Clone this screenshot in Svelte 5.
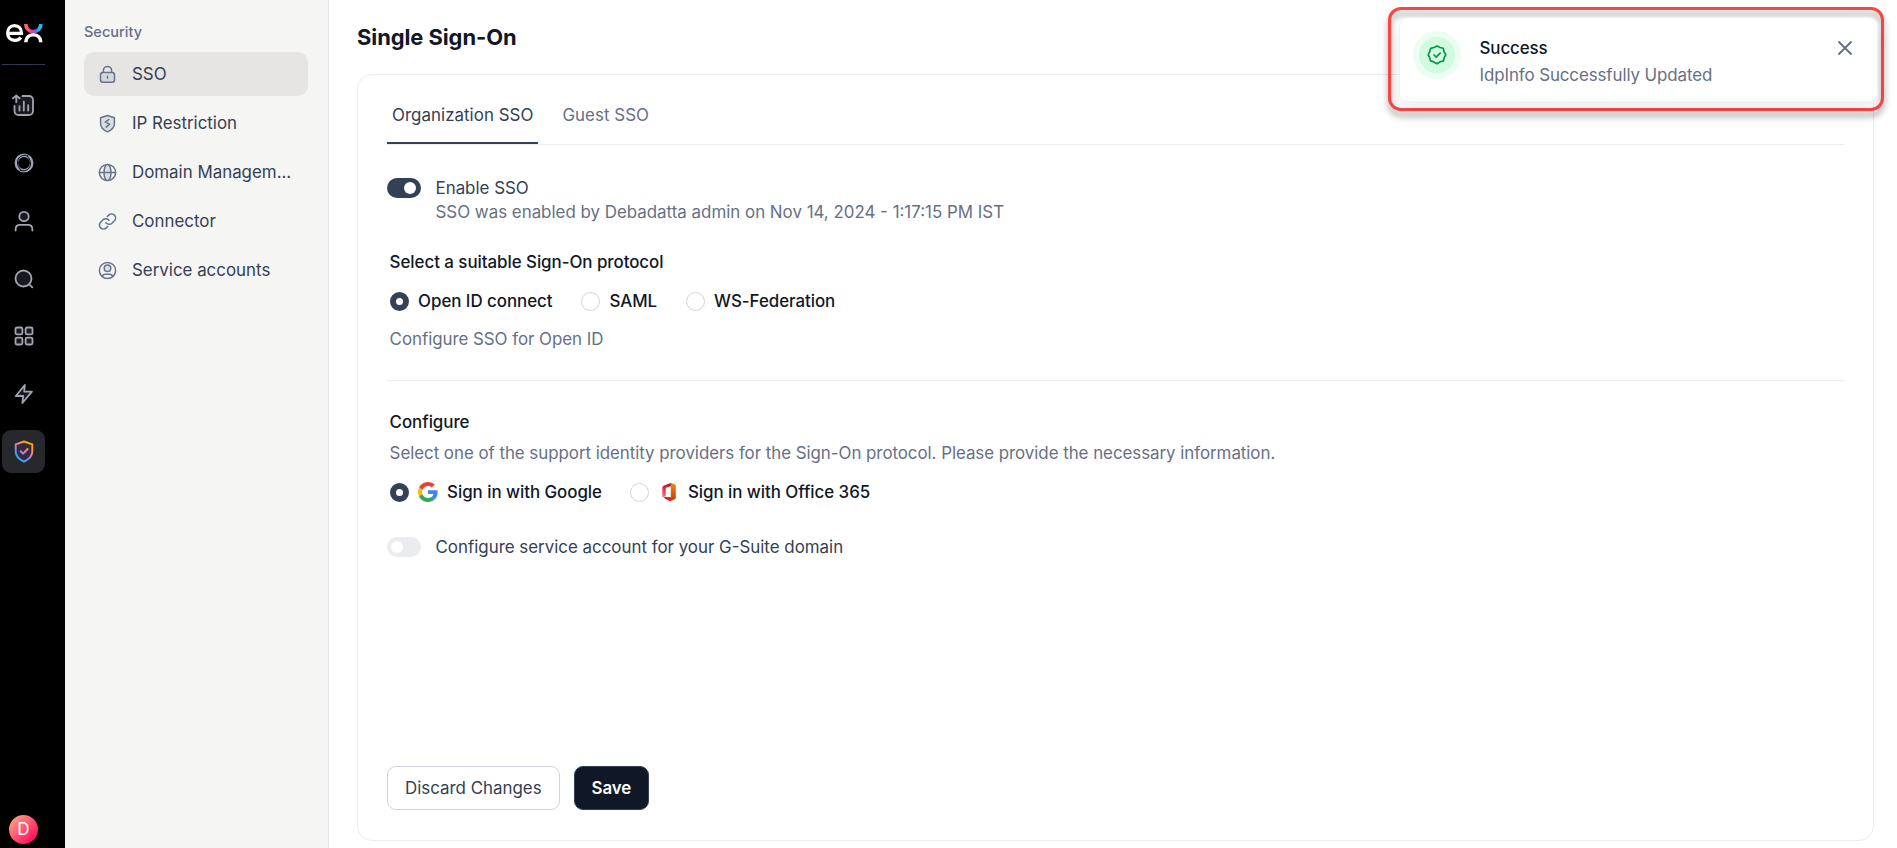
<script>
  const nav = [
    { id: 'lock', label: 'SSO', active: true },
    { id: 'shield', label: 'IP Restriction' },
    { id: 'globe', label: 'Domain Managem...' },
    { id: 'link', label: 'Connector' },
    { id: 'user', label: 'Service accounts' }
  ];
  const protocols = ['Open ID connect', 'SAML', 'WS-Federation'];
  let protocol = $state('Open ID connect');
  let provider = $state('google');
</script>

<div class="app">
  <aside class="rail">
    <svg class="logo" width="38" height="20" viewBox="0 0 38 20" fill="none">
      <defs>
        <linearGradient id="lx" x1="19" y1="0" x2="37" y2="0" gradientUnits="userSpaceOnUse">
          <stop offset="0" stop-color="#ff7a50" /><stop offset=".4" stop-color="#f0389c" /><stop offset=".65" stop-color="#7060f0" /><stop offset=".85" stop-color="#10c0f5" />
        </linearGradient>
      </defs>
      <path d="M2.500 10.300h14c0-4.800-2.800-7.700-6.900-7.700s-7 3-7 7.500 3 7.300 7.200 7.300c2.800 0 4.700-1 6-2.900" stroke="#fff" stroke-width="3.200" />
      <path d="M20.800 1c0 4.500 3.300 7.600 7.500 7.600s7.500-3.100 7.500-7.600" stroke="url(#lx)" stroke-width="3.600" />
      <path d="M20.800 19.200c0-4.500 3.300-7.400 7.500-7.400s7.500 2.900 7.500 7.400" stroke="#fff" stroke-width="3.600" />
    </svg>
    <div class="divider"></div>
    <nav class="icons">
      <span class="ri"><svg width="23" height="23" viewBox="0 0 23 23" fill="none" stroke="#a3a3b2" stroke-width="1.800" stroke-linecap="round" stroke-linejoin="round">
        <rect x="3" y="2" width="18" height="18" rx="3" fill="#191a1f" stroke="none" /><path d="M10.500 2H17a4 4 0 0 1 4 4v11a4 4 0 0 1-4 4H6.500a4 4 0 0 1-4-4v-5M4.300 8V1.500M1 4.400l3.300-3 3.300 3M7.500 16.500v-4.300M11.800 16.500V7.500M16.200 16.500v-5.300" />
      </svg></span>
      <span class="ri"><svg width="20" height="20" viewBox="0 0 20 20" fill="none">
        <circle cx="10" cy="10" r="7.700" stroke="#9ca3b4" stroke-width="3.500" />
        <path d="M14.500 3C10 .9 4.800 3.200 3.700 7.500c-.9 3.800.7 7.300 3.600 9.400" stroke="#08090b" stroke-width="1" />
        <path d="M5.500 17c4.500 2.100 9.700-.2 10.800-4.500.9-3.800-.7-7.300-3.600-9.400" stroke="#08090b" stroke-width="1" />
      </svg></span>
      <span class="ri"><svg width="20" height="22" viewBox="0 0 20 22" fill="none" stroke="#a3a3b2" stroke-width="1.800" stroke-linecap="round">
        <circle cx="10" cy="6.500" r="4.700" fill="#191a1f" /><path d="M1.600 20.500v-1.300c0-2.600 1.800-4.400 4.400-4.400h8c2.600 0 4.400 1.800 4.400 4.400v1.300" />
      </svg></span>
      <span class="ri"><svg width="20" height="20" viewBox="0 0 20 20" fill="none" stroke="#a3a3b2" stroke-width="1.800" stroke-linecap="round">
        <circle cx="9.500" cy="9.500" r="8" fill="#191a1f" /><path d="m15.300 15.300 3 3" />
      </svg></span>
      <span class="ri"><svg width="20" height="20" viewBox="0 0 20 20" fill="#191a1f" stroke="#a3a3b2" stroke-width="1.800">
        <rect x="1.500" y="1.500" width="6.900" height="6.900" rx="1.500" /><rect x="11.600" y="1.500" width="6.900" height="6.900" rx="1.500" /><rect x="1.500" y="11.600" width="6.900" height="6.900" rx="1.500" /><rect x="11.600" y="11.600" width="6.900" height="6.900" rx="1.500" />
      </svg></span>
      <span class="ri"><svg width="20" height="22" viewBox="0 0 20 22" fill="#191a1f" stroke="#a3a3b2" stroke-width="1.800" stroke-linejoin="round">
        <path d="M10.800 2 1.800 13h7.400l-.8 7 9.500-11.400h-7.700z" />
      </svg></span>
      <span class="ri on"><svg width="20" height="23" viewBox="0 0 20 23" fill="none" stroke="url(#sg)" stroke-width="1.900" stroke-linecap="round" stroke-linejoin="round">
        <defs><linearGradient id="sg" x1="17" y1="3" x2="5" y2="19" gradientUnits="userSpaceOnUse">
          <stop offset="0" stop-color="#ffa800" /><stop offset=".25" stop-color="#fb9a4b" /><stop offset=".55" stop-color="#e070d8" /><stop offset=".8" stop-color="#4f9df5" /><stop offset="1" stop-color="#3ca5f5" />
        </linearGradient></defs>
        <path d="M10 1.500 18.300 4.300v7.200c0 5-3.800 8-8.300 10.200-4.500-2.200-8.300-5.200-8.300-10.200V4.300z" fill="#342b3c" /><path d="m6.600 11.200 2.600 2.500L13.600 9" />
      </svg></span>
    </nav>
    <div class="avatar">D</div>
  </aside>

  <aside class="panel">
    <h2>Security</h2>
    {#each nav as item}
      <div class="item" class:active={item.active}>
        <svg width="19" height="19" viewBox="0 0 19 19" fill="none" stroke="#67738a" stroke-width="1.500" stroke-linecap="round" stroke-linejoin="round">
          {#if item.id === 'lock'}
            <rect x="2.500" y="7.500" width="14" height="9.700" rx="2.500" fill="#d7d8da" /><path d="M5.400 7.300V5.500a4.100 4.100 0 0 1 8.200 0v1.800M9.500 11.300v2" />
          {:else if item.id === 'shield'}
            <path d="m9.500 1.500 6.900 2.200v6.200c0 3.700-3 6-6.900 8-3.900-2-6.900-4.300-6.900-8V3.700z" fill="#dcdee1" /><path d="M10.800 5.600 7.300 8.100l4.400 2-3.500 3" />
          {:else if item.id === 'globe'}
            <circle cx="9.500" cy="9.500" r="8.100" /><ellipse cx="9.500" cy="9.500" rx="3.500" ry="8.100" fill="#dcdee1" /><path d="M1.400 9.500h16.200" />
          {:else if item.id === 'link'}
            <path d="M8 10.700a4 4 0 0 0 6 .5l2.400-2.400a4 4 0 0 0-5.700-5.700L9.300 4.500M11 8.300a4 4 0 0 0-6-.5L2.600 10.200a4 4 0 0 0 5.700 5.700l1.400-1.400" />
          {:else}
            <circle cx="9.500" cy="9.500" r="8.100" /><circle cx="9.500" cy="7.300" r="3.300" fill="#dcdee1" /><path d="M4.300 15.500c.5-1.700 1.600-2.300 3-2.300h4.400c1.400 0 2.500.6 3 2.300" />
          {/if}
        </svg>
        <span>{item.label}</span>
      </div>
    {/each}
  </aside>

  <main>
    <h1>Single Sign-On</h1>
    <section class="card">
      <div class="tabs">
        <div class="tab current">Organization SSO</div>
        <div class="tab">Guest SSO</div>
      </div>

      <div class="switchrow enable">
        <span class="toggle checked"></span>
        <div>
          <div>Enable SSO</div>
          <div class="muted">SSO was enabled by Debadatta admin on Nov 14, 2024 - 1:17:15 PM IST</div>
        </div>
      </div>

      <div class="block">
        <h3>Select a suitable Sign-On protocol</h3>
        <div class="radios first">
          {#each protocols as p}
            <button class="opt" onclick={() => (protocol = p)}><i class:sel={protocol === p}></i>{p}</button>
          {/each}
        </div>
        <p>Configure SSO for Open ID</p>
      </div>

      <div class="rule"></div>

      <div class="block second">
        <h3>Configure</h3>
        <p class="desc">Select one of the support identity providers for the Sign-On protocol. Please provide the necessary information.</p>
        <div class="radios prov">
          <button class="opt" onclick={() => (provider = 'google')}><i class:sel={provider === 'google'}></i>
            <svg width="20" height="20" viewBox="0 0 48 48">
              <path fill="#ea4335" d="M24 9.500c3.540 0 6.710 1.220 9.210 3.600l6.850-6.850C35.900 2.380 30.470 0 24 0 14.620 0 6.510 5.380 2.560 13.220l7.980 6.190C12.430 13.720 17.740 9.500 24 9.500z" />
              <path fill="#4285f4" d="M46.980 24.550c0-1.570-.15-3.090-.38-4.550H24v9.020h12.940c-.58 2.960-2.260 5.480-4.780 7.180l7.730 6c4.510-4.180 7.090-10.360 7.090-17.650z" />
              <path fill="#fbbc05" d="M10.530 28.590c-.48-1.450-.76-2.990-.76-4.590s.27-3.140.76-4.590l-7.980-6.190C.92 16.460 0 20.120 0 24s.92 7.540 2.560 10.780z" />
              <path fill="#34a853" d="M24 48c6.480 0 11.930-2.130 15.890-5.810l-7.730-6c-2.150 1.450-4.920 2.300-8.160 2.300-6.260 0-11.570-4.220-13.470-9.910l-7.980 6.190C6.510 42.620 14.620 48 24 48z" />
            </svg>Sign in with Google</button>
          <button class="opt" onclick={() => (provider = 'office')}><i class:sel={provider === 'office'}></i>
            <svg width="20" height="20" viewBox="0 0 20 20">
              <defs>
                <linearGradient id="o1" x1="0" y1="0" x2="0" y2="1"><stop offset="0" stop-color="#f08a18" /><stop offset="1" stop-color="#cf3705" /></linearGradient>
                <linearGradient id="o2" x1="1" y1="0" x2="0" y2="1"><stop offset="0" stop-color="#a01818" /><stop offset=".55" stop-color="#e02838" /><stop offset="1" stop-color="#f58ba0" /></linearGradient>
              </defs>
              <path fill="url(#o2)" d="M11.800 1 5 3.500C3.900 3.900 3.200 4.800 3.200 6v8.500c0 .8.500 1.100 1.100.8l1.400-.7c.7-.4 1-.8 1-1.600V7c0-.8.3-1.200 1-1.500l4.600-1.600z" />
              <path fill="url(#o1)" d="M11.800 1v14.600l-5.600-.7c-1 0-1.100.8-.4 1.300l4 2.400c.7.400 1.400.5 2.200.2l3.300-1.200c.9-.3 1.500-1.100 1.500-2V4c0-.8-.5-1.400-1.300-1.700z" />
              <path fill="#d91f2c" d="M11.800 15.600 6 14.800c-1 .1-1 .9-.2 1.400l4 2.400c.7.400 1.300.4 2 .2z" />
            </svg>Sign in with Office 365</button>
        </div>
      </div>

      <div class="switchrow gsuite">
        <span class="toggle"></span>
        <div>Configure service account for your G-Suite domain</div>
      </div>

      <div class="actions">
        <button class="btn">Discard Changes</button>
        <button class="btn primary">Save</button>
      </div>
    </section>
  </main>

  <div class="callout"></div>
  <div class="toast">
    <div class="halo"><div class="disc">
      <svg width="20" height="20" viewBox="0 0 20 20" fill="none" stroke="#099250" stroke-width="1.700" stroke-linecap="round" stroke-linejoin="round">
        <path d="M10 1.100 13 2.500l3.200.8.800 3.300 1.800 3-1.600 3-.7 3.300-3.300.9-3.200 1.900-3.200-1.800-3.300-1-.8-3.300L1.200 10l1.500-3.300.9-3.300L7 2.500z" /><path d="m7 10 2.200 2.100 4-4" />
      </svg>
    </div></div>
    <div class="msg"><div class="head">Success</div><div class="muted">IdpInfo Successfully Updated</div></div>
    <svg class="close" width="16" height="16" viewBox="0 0 16 16" fill="none" stroke="#667085" stroke-width="1.900" stroke-linecap="round"><path d="m2 2 12 12M14 2 2 14" /></svg>
  </div>
</div>

<style>
  :global(body) { margin: 0; overflow: hidden; }
  .app { position: relative; display: flex; width: 100%; height: 848px; overflow: hidden; background: #fff; color: #344054; font: 400 16.900px/24px Inter, sans-serif; }
  * { box-sizing: border-box; }
  h1, h2, h3, p { margin: 0; }
  svg { display: block; flex: none; }
  button { font: inherit; color: inherit; padding: 0; border: 0; background: none; }
  .muted { color: #667085; }

  .rail { width: 65px; flex: none; background: #000; padding: 23px 0 4px 2px; display: flex; flex-direction: column; }
  .logo { margin-left: 3px; }
  .divider { width: 43px; height: 1px; margin-top: 21px; background: #2d3c55; }
  .icons { display: flex; flex-direction: column; gap: 14.600px; margin-top: 19.400px; width: 43px; }
  .ri { width: 43px; height: 43px; display: flex; align-items: center; justify-content: center; border-radius: 9px; }
  .ri.on { background: #27282c; }
  .avatar { width: 29px; height: 29px; margin: auto 0 0 7px; border-radius: 50%; background: linear-gradient(135deg, #ff9f80 10%, #ff1060 85%); color: #fff; font-size: 17px; line-height: 29px; text-align: center; }

  .panel { width: 264px; flex: none; background: #f5f5f4; border-right: 1px solid #e7e7ea; padding: 20px 20px 0 19px; }
  .panel h2 { font-size: 14.500px; line-height: 24px; height: 32px; font-weight: 450; color: #667085; }
  .item { display: flex; align-items: center; height: 44px; margin-bottom: 5px; padding: 0 8px 0 14px; gap: 15px; border-radius: 10px; }
  .item.active { background: #e6e5e3; }
  .item span { white-space: nowrap; }

  main { flex: 1; padding: 21px 23px 7px 28px; display: flex; flex-direction: column; }
  h1 { font-size: 21.900px; line-height: 32px; font-weight: 700; letter-spacing: -.06px; color: #101828; }
  .card { flex: 1; margin-top: 21px; border: 1px solid #eaecf0; border-radius: 15px; padding: 24px 29px 30px; display: flex; flex-direction: column; }
  .tabs { display: flex; gap: 19px; height: 46px; border-bottom: 1px solid #eaecf0; }
  .tab { padding: 4px 5px 0; height: 45px; color: #667085; letter-spacing: .04px; }
  .tab.current { color: #344054; border-bottom: 2px solid #344054; }
  .switchrow { display: flex; gap: 14.500px; }
  .toggle { width: 34px; height: 20px; border-radius: 10px; background: #eaecf0; padding: 4px; margin-top: 2px; flex: none; }
  .toggle::before { content: ''; display: block; width: 12px; height: 12px; border-radius: 50%; background: #fff; }
  .toggle.checked { background: #344054; padding-left: 17px; }
  .enable { margin-top: 31px; }
  .block { padding-left: 2.600px; color: #101828; letter-spacing: -.04px; }
  h3 { font-size: 16.900px; line-height: 24px; font-weight: 500; color: #101828; }
  .enable + .block { margin-top: 26px; }
  .block p { color: #667085; }
  .radios { display: flex; align-items: center; height: 24px; color: #101828; }
  .first { margin: 15px 0 14px; gap: 28.500px; }
  .opt { display: flex; align-items: center; gap: 9.500px; font-weight: 500; letter-spacing: -.04px; }
  .opt svg { margin-right: -1px; }
  .prov .opt svg { margin-right: -.5px; }
  .opt i { width: 19px; height: 19px; border-radius: 50%; border: 1px solid #d0d5dd; flex: none; }
  .opt i.sel { border: 6px solid #344054; }
  .rule { height: 1px; margin-top: 29px; background: #eaecf0; }
  .second { margin-top: 29px; }
  .desc { margin-top: 7px; }
  .prov { margin-top: 15px; gap: 28.500px; }
  .gsuite { margin-top: 31px; }
  .actions { display: flex; gap: 14px; margin-top: auto; }
  .btn { height: 44px; padding: 0 17px; border: 1px solid #d0d5dd; border-radius: 9px; background: #fff; }
  .btn.primary { background: #101828; border-color: #344054; color: #fff; font-weight: 600; letter-spacing: -.15px; }

  .callout { position: absolute; left: 1388px; top: 7px; width: 496px; height: 104px; border: 3px solid #fc4444; border-radius: 13px; filter: drop-shadow(0 5px 3px rgba(0, 0, 0, .4)); z-index: 3; pointer-events: none; }
  .toast { position: absolute; left: 1399px; top: 17px; width: 479px; height: 85px; display: flex; background: #fff; border: 1px solid #f0f1f3; border-radius: 9px; box-shadow: 0 12px 20px rgba(16, 24, 40, .07); padding: 13px; z-index: 4; }
  .halo { width: 48px; height: 48px; border-radius: 50%; background: #ecfdf3; padding: 6px; flex: none; }
  .disc { width: 36px; height: 36px; border-radius: 50%; background: #d1fadf; display: grid; place-items: center; }
  .msg { flex: 1; margin: 5px 0 0 18.500px; letter-spacing: -.09px; }
  .head { color: #101828; font-weight: 500; margin-bottom: 3px; }
  .close { margin: 9px 11px 0 0; }
</style>
